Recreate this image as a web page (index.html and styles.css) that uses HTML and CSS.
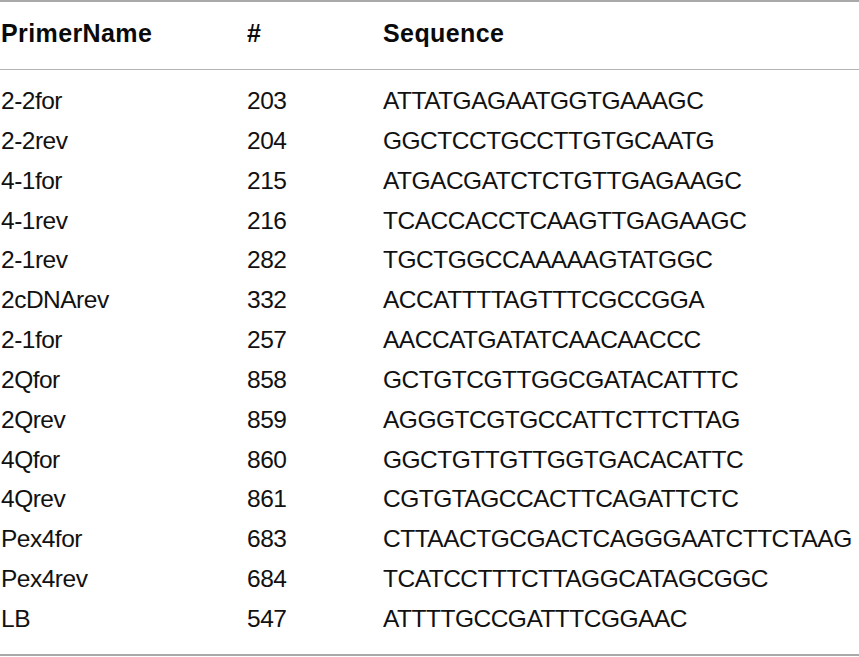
FILE: index.html
```html
<!DOCTYPE html>
<html>
<head>
<meta charset="utf-8">
<link rel="stylesheet" href="styles.css">
</head>
<body>
<table class="primers">
  <thead>
    <tr><th class="c1">PrimerName</th><th class="c2">#</th><th class="c3">Sequence</th></tr>
  </thead>
  <tbody>
    <tr class="first"><td>2-2for</td><td>203</td><td>ATTATGAGAATGGTGAAAGC</td></tr>
    <tr><td>2-2rev</td><td>204</td><td>GGCTCCTGCCTTGTGCAATG</td></tr>
    <tr><td>4-1for</td><td>215</td><td>ATGACGATCTCTGTTGAGAAGC</td></tr>
    <tr><td>4-1rev</td><td>216</td><td>TCACCACCTCAAGTTGAGAAGC</td></tr>
    <tr><td>2-1rev</td><td>282</td><td>TGCTGGCCAAAAAGTATGGC</td></tr>
    <tr><td>2cDNArev</td><td>332</td><td>ACCATTTTAGTTTCGCCGGA</td></tr>
    <tr><td>2-1for</td><td>257</td><td>AACCATGATATCAACAACCC</td></tr>
    <tr><td>2Qfor</td><td>858</td><td>GCTGTCGTTGGCGATACATTTC</td></tr>
    <tr><td>2Qrev</td><td>859</td><td>AGGGTCGTGCCATTCTTCTTAG</td></tr>
    <tr><td>4Qfor</td><td>860</td><td>GGCTGTTGTTGGTGACACATTC</td></tr>
    <tr><td>4Qrev</td><td>861</td><td>CGTGTAGCCACTTCAGATTCTC</td></tr>
    <tr><td>Pex4for</td><td>683</td><td>CTTAACTGCGACTCAGGGAATCTTCTAAG</td></tr>
    <tr><td>Pex4rev</td><td>684</td><td>TCATCCTTTCTTAGGCATAGCGGC</td></tr>
    <tr class="last"><td>LB</td><td>547</td><td>ATTTTGCCGATTTCGGAAC</td></tr>
  </tbody>
</table>
</body>
</html>
```
FILE: styles.css
```css
html, body {
  margin: 0;
  padding: 0;
  background: #ffffff;
}
body {
  width: 859px;
  height: 657px;
  overflow: hidden;
  font-family: "Liberation Sans", Arial, sans-serif;
  color: #111111;
}
.primers {
  width: 859px;
  border-collapse: collapse;
  border-top: 2px solid #a9a9a9;
  border-bottom: 2px solid #a9a9a9;
  table-layout: fixed;
}
.primers th {
  font-size: 25px;
  font-weight: bold;
  text-align: left;
  letter-spacing: 0.4px;
  line-height: 29px;
  padding: 17px 0 21px 0;
  border-bottom: 1px solid #b4b4b4;
  color: #0a0a0a;
}
.primers th.c1 { width: 246px; padding-left: 1px; }
.primers th.c2 { width: 136px; }
.primers td {
  font-size: 24.5px;
  letter-spacing: -0.5px;
  line-height: 39.85px;
  padding: 0;
  white-space: nowrap;
  vertical-align: top;
}
.primers td:first-child { padding-left: 1px; }
.primers tr.first td { padding-top: 11px; }
.primers tr.last td { padding-bottom: 15px; }
```
